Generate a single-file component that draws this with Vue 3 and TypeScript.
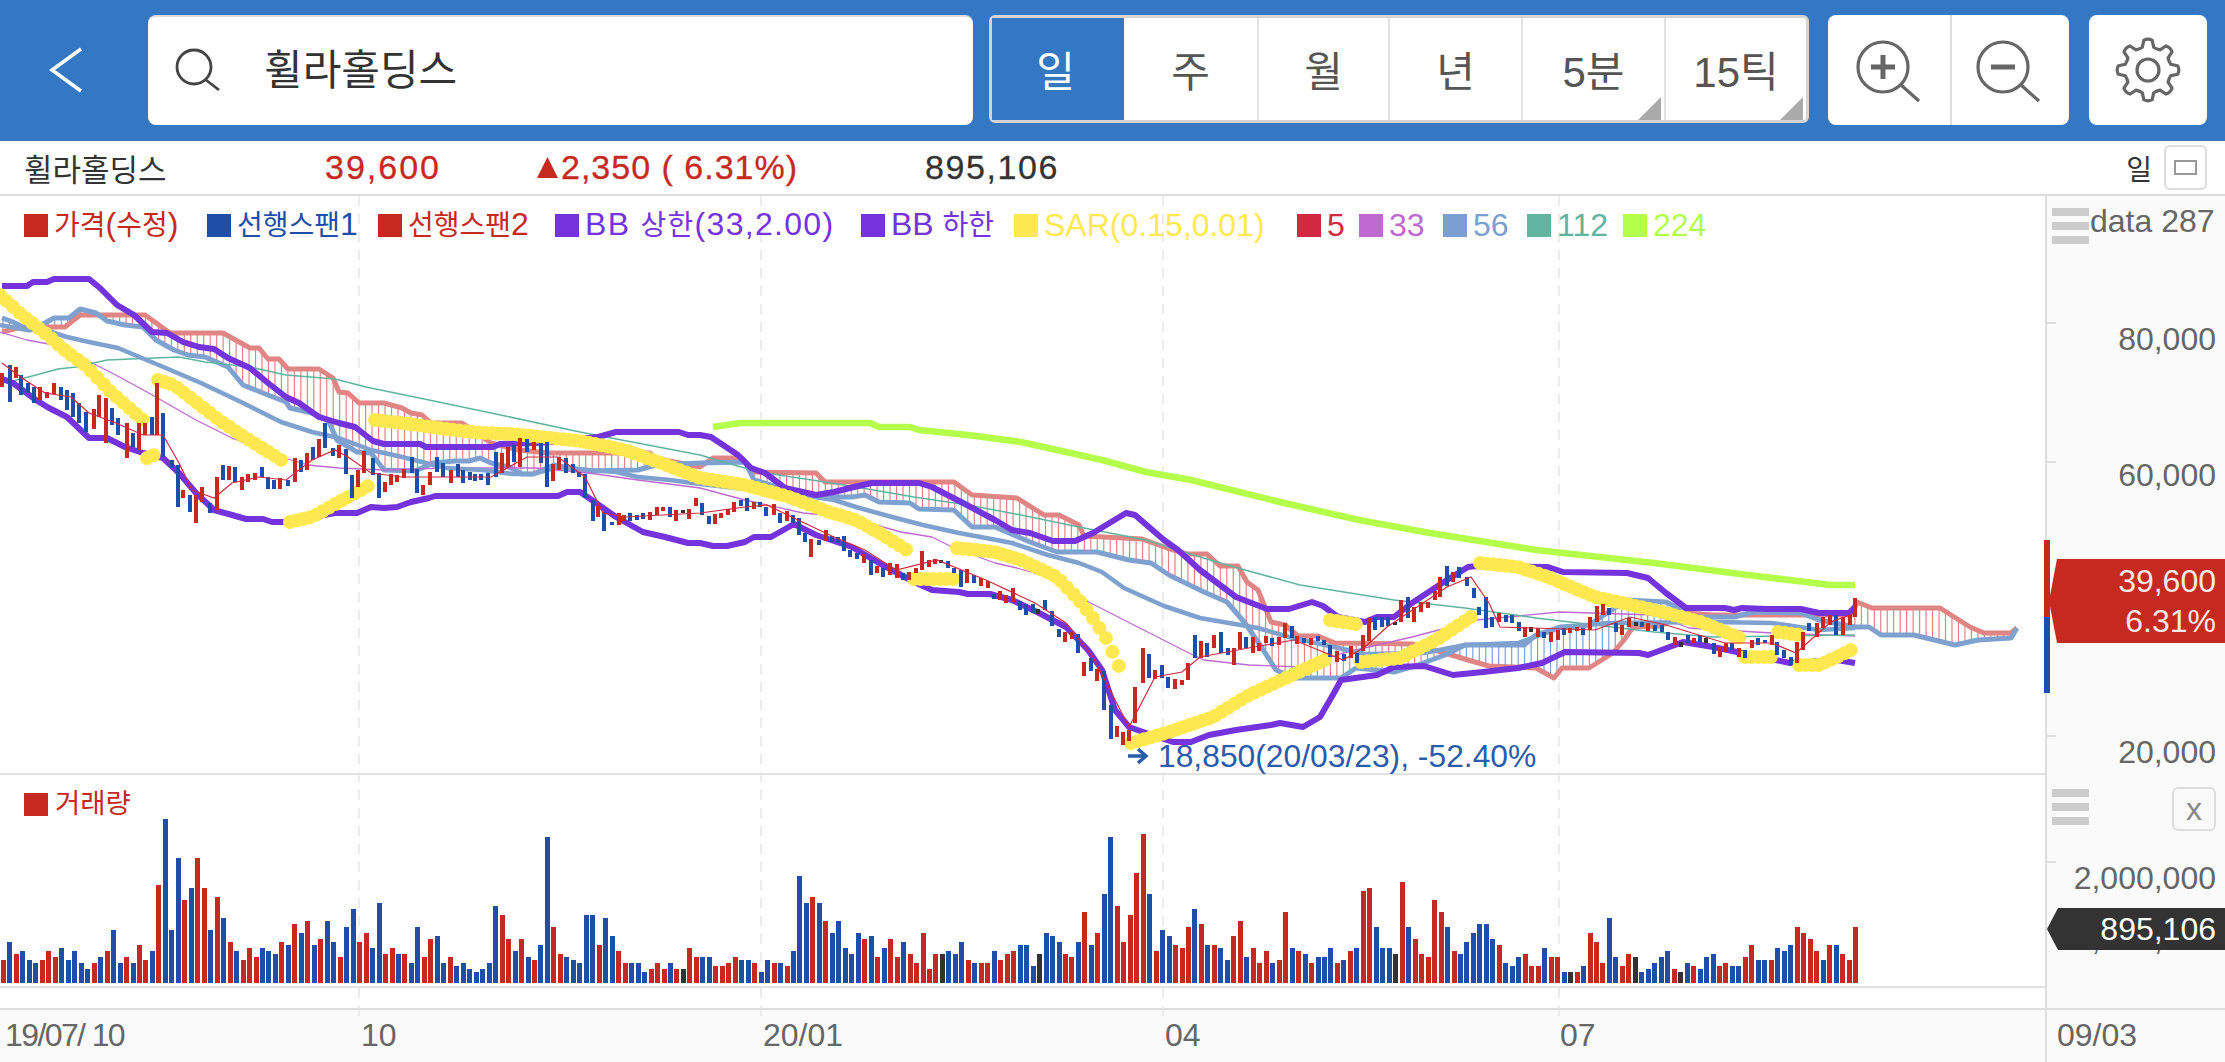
<template>
  <div class="screen">
    <header class="topbar">
      <button class="back">
        <svg width="40" height="50" viewBox="0 0 40 50"><path d="M36 4 L7 25 L36 46" class="chevron" /></svg>
      </button>
      <div class="search">
        <svg width="54" height="46" viewBox="0 0 54 46">
          <circle cx="22" cy="19" r="17" class="ico" />
          <path d="M34 32 L47 42" class="ico" />
        </svg>
        <span class="search-text">휠라홀딩스</span>
      </div>
      <div class="periods">
        <div v-for="p in periods" :key="p.label" class="period" :class="{ active: p.active, more: p.more }">{{ p.label }}</div>
      </div>
      <div class="tools">
        <div class="tool">
          <svg width="76" height="72" viewBox="0 0 76 72">
            <circle cx="30" cy="28" r="25" class="ico3" />
            <path d="M48 46 L66 62" class="ico3" />
            <path d="M18 28 H42 M30 16 V40" class="ico-bold" />
          </svg>
        </div>
        <div class="tool">
          <svg width="76" height="72" viewBox="0 0 76 72">
            <circle cx="30" cy="28" r="25" class="ico3" />
            <path d="M48 46 L66 62" class="ico3" />
            <path d="M18 28 H42" class="ico-bold" />
          </svg>
        </div>
      </div>
      <div class="settings">
        <svg width="70" height="66" viewBox="-35 -33 70 66">
          <path :d="gearPath" class="ico3" />
          <circle r="11" class="ico3" />
        </svg>
      </div>
    </header>

    <div class="quote">
      <span class="q-name">휠라홀딩스</span>
      <span class="q-price">39,600</span>
      <span class="q-change"><i class="tri"></i>2,350 ( 6.31%)</span>
      <span class="q-volume">895,106</span>
      <span class="q-period">일</span>
      <span class="q-box"><i></i></span>
    </div>

    <div class="chart">
      <div class="plot-col">
        <svg class="grid-lines" width="2045" height="824">
          <line v-for="g in gridX" :key="g.x" :x1="g.x" :x2="g.x" y1="0" y2="824" />
        </svg>

        <div class="pane-main">
          <svg width="2045" height="577" viewBox="0 196 2045 577">
            <line v-for="(h, i) in hatch" :key="'h' + i" :x1="h.x" :x2="h.x" :y1="h.y1" :y2="h.y2" :stroke="h.color" stroke-width="1.2" />
            <polyline v-for="s in lines" :key="s.name" :points="s.points" :stroke="s.color" :stroke-width="s.width" fill="none" stroke-linejoin="round" />
            <circle v-for="(d, i) in sarDots" :key="'d' + i" :cx="d[0]" :cy="d[1]" r="7" fill="#fde94f" />
            <rect v-for="(c, i) in candles" :key="'c' + i" :x="c.x" :y="c.y" width="4" :height="c.h" :fill="c.color" shape-rendering="crispEdges" />
            <polyline :points="ma5" stroke="#d1293f" stroke-width="1.2" fill="none" />
          </svg>
          <div class="legend">
            <span v-for="l in legend" :key="l.text" class="legend-item" :style="{ color: l.color, width: l.w + 'px', letterSpacing: (l.ls || 0) + 'px' }">
              <i :style="{ background: l.color }"></i>
              <span class="legend-text"><span v-for="(part, k) in splitHangul(l.text)" :key="k" :class="{ kr: /[가-힣]/.test(part) }">{{ part }}</span></span>
            </span>
          </div>
          <div class="low-mark">
            <svg width="22" height="20" viewBox="0 0 22 20"><path d="M1 10 H19 M11 3 L19 10 L11 17" fill="none" stroke="#2b5bab" stroke-width="3.4" /></svg>
            18,850(20/03/23), -52.40%
          </div>
        </div>

        <div class="pane-volume">
          <svg width="2045" height="213" viewBox="0 775 2045 213">
            <rect v-for="(b, i) in volumeBars" :key="i" :x="b.x" :y="b.y" width="5" :height="b.h" :fill="b.color" shape-rendering="crispEdges" />
          </svg>
          <div class="vol-title"><i></i>거래량</div>
        </div>

        <div class="spacer"></div>

        <div class="dates">
          <span v-for="d in dateLabels" :key="d.text" :class="{ tight: d.tight }" :style="{ left: d.x + 'px' }">{{ d.text }}</span>
        </div>
      </div>

      <div class="axis-col">
        <div class="axis-main">
          <div class="axis-head">
            <div class="bars"><i></i><i></i><i></i></div>
            <span class="data-count">data 287</span>
          </div>
          <i v-for="t in priceTicks" :key="t" class="tick" :style="{ top: t + 'px' }"></i>
          <span v-for="l in priceLabels" :key="l.text" class="axis-label" :style="{ top: l.y + 'px' }">{{ l.text }}</span>
          <i class="range-up"></i>
          <i class="range-down"></i>
          <div class="price-tag">
            <span>39,600</span>
            <span>6.31%</span>
          </div>
        </div>
        <div class="axis-volume">
          <div class="bars small"><i></i><i></i><i></i></div>
          <div class="close-box">x</div>
          <i class="tick" style="top: 86px"></i>
          <span class="axis-label" style="top: 85px">2,000,000</span>
          <span class="axis-label behind" style="top: 146px">1,000,000</span>
          <div class="volume-tag">895,106</div>
        </div>
        <div class="spacer"></div>
        <div class="dates"><span style="left: 10px">09/03</span></div>
      </div>
    </div>
  </div>
</template>

<script setup lang="ts">
type Pt = [number, number]

const RED = '#c6291f'
const BLUE = '#1e4fa8'
const DARK = '#333333'

const periods = [
  { label: '일', active: true },
  { label: '주' },
  { label: '월' },
  { label: '년' },
  { label: '5분', more: true },
  { label: '15틱', more: true }
]

const legend = [
  { text: '가격(수정)', color: RED, w: 183 },
  { text: '선행스팬1', color: BLUE, w: 171 },
  { text: '선행스팬2', color: RED, w: 177 },
  { text: 'BB 상한(33,2.00)', color: '#7433dd', w: 306, ls: 1.3 },
  { text: 'BB 하한', color: '#7433dd', w: 153 },
  { text: 'SAR(0.15,0.01)', color: '#fde94f', w: 283 },
  { text: '5', color: '#d1293f', w: 62 },
  { text: '33', color: '#bf6ad0', w: 84 },
  { text: '56', color: '#7a9fd0', w: 84 },
  { text: '112', color: '#60b4a0', w: 96 },
  { text: '224', color: '#b4ff4a', w: 90 }
]

const splitHangul = (s: string) => s.split(/([가-힣]+)/).filter(Boolean)

const gridX = [{ x: 359 }, { x: 761 }, { x: 1163 }, { x: 1559 }]
const dateLabels = [
  { text: '19/07/ 10', x: 5, tight: true },
  { text: '10', x: 361 },
  { text: '20/01', x: 763 },
  { text: '04', x: 1165 },
  { text: '07', x: 1560 }
]
// tops inside the price pane
const priceTicks = [126, 265, 402, 539]
const priceLabels = [
  { text: '80,000', y: 125 },
  { text: '60,000', y: 261 },
  { text: '20,000', y: 538 }
]

const parse = (s: string): Pt[] =>
  s.trim().split(/\s+/).map((p) => p.split(',').map(Number) as Pt)

// traced off the reference, full size pixels
const bbUp = '2,286 27,286 33,282 47,282 54,279 89,279 100,288 117,305 134,315 152,332 167,333 183,342 199,347 214,349 228,358 250,368 268,383 286,397 299,403 319,417 339,423 355,427 373,441 384,444 420,444 426,447 493,447 500,444 536,443 553,442 598,437 616,432 679,432 688,435 700,435 711,437 738,455 751,468 765,473 785,488 816,495 834,492 854,487 872,483 919,483 932,487 963,503 995,520 1012,530 1030,533 1053,541 1075,541 1093,533 1126,513 1135,515 1164,540 1178,550 1200,570 1236,597 1267,609 1289,609 1312,602 1323,606 1338,617 1365,622 1377,617 1394,617 1412,603 1447,580 1468,567 1477,566 1548,567 1563,572 1627,573 1648,578 1666,593 1686,608 1725,608 1734,610 1742,608 1766,609 1801,609 1819,613 1849,613 1855,607'
const bbDown = '0,378 13,383 36,400 49,408 67,417 89,438 107,438 125,447 143,453 163,458 179,473 196,493 214,510 232,515 246,519 263,519 272,522 286,522 335,513 357,513 371,507 384,508 397,507 411,502 429,498 435,496 558,496 567,492 580,492 589,498 616,517 643,532 665,537 688,543 700,543 713,546 727,546 745,542 754,537 771,537 794,524 816,535 852,547 879,563 914,582 932,590 959,592 968,594 990,594 1012,600 1039,613 1066,627 1088,650 1102,670 1115,710 1129,727 1146,733 1173,742 1191,742 1209,735 1236,730 1271,725 1280,723 1303,727 1320,717 1334,693 1341,680 1377,675 1394,667 1424,666 1453,675 1483,672 1518,668 1542,663 1565,652 1639,653 1648,655 1683,642 1713,647 1742,653 1790,663 1837,660 1855,663'
const span2 = '2,332 22,327 65,327 80,315 145,315 170,333 223,333 250,348 259,348 268,359 279,359 288,369 319,369 333,378 339,392 348,393 359,403 384,403 402,408 411,413 422,415 431,423 462,423 491,443 518,450 549,453 650,453 654,458 700,467 713,458 742,458 754,472 816,473 825,482 954,482 972,495 1017,498 1044,515 1059,515 1079,525 1084,536 1142,539 1167,548 1187,554 1207,554 1220,566 1238,566 1247,582 1258,590 1271,622 1285,625 1298,636 1318,636 1335,643 1412,644 1445,653 1468,660 1489,666 1536,668 1554,678 1562,668 1589,668 1613,653 1624,640 1633,627 1660,626 1686,613 1713,615 1852,615 1857,602 1872,608 1940,608 1970,627 1984,633 2011,633 2017,628'
const span1 = '2,318 13,322 29,330 45,323 54,318 69,318 80,309 96,313 107,321 125,325 143,327 156,340 174,350 188,355 205,357 219,363 228,367 243,385 268,395 286,402 290,408 312,413 328,420 337,440 357,452 371,453 384,470 415,471 433,463 455,461 469,461 480,458 491,463 509,467 522,474 533,474 554,465 585,471 638,470 656,465 700,463 745,462 754,480 771,485 820,497 852,497 865,495 879,502 910,503 919,509 954,510 972,527 995,527 1030,542 1057,552 1097,552 1129,560 1151,563 1169,575 1204,592 1227,602 1245,623 1262,648 1276,670 1294,678 1341,678 1356,668 1377,670 1394,672 1418,665 1445,655 1465,645 1524,645 1536,635 1560,627 1589,625 1627,600 1666,602 1683,610 1689,617 1734,617 1754,612 1801,613 1819,620 1855,627 1869,627 1881,635 1914,635 1955,645 1978,640 2011,638 2017,628'
const ma56 = '0,325 27,330 45,330 67,337 89,342 118,348 161,366 201,383 241,402 281,422 312,432 339,438 371,450 402,457 446,468 482,470 513,474 533,474 558,467 589,470 616,472 638,477 670,480 700,484 745,489 789,493 834,500 856,507 892,517 923,525 959,533 986,538 1012,543 1048,555 1079,563 1102,572 1124,588 1164,606 1200,618 1258,628 1289,637 1325,645 1365,654 1424,653 1465,645 1518,643 1560,628 1607,623 1713,622 1772,623 1819,630 1855,628'
const ma33 = '0,332 27,340 54,345 80,357 112,373 147,392 196,420 232,438 268,453 308,465 339,468 384,470 446,468 536,468 589,473 638,480 700,488 745,500 803,513 847,517 901,532 932,537 954,548 995,563 1017,568 1048,577 1079,597 1124,620 1187,652 1204,660 1249,665 1303,667 1343,653 1412,637 1477,620 1560,612 1654,615 1689,628 1772,633 1855,636'
const ma112 = '9,382 36,375 58,369 76,367 107,360 179,357 205,362 250,367 286,375 335,379 366,387 429,400 491,413 580,432 700,455 758,472 812,480 856,487 914,497 968,505 1021,515 1079,527 1146,540 1200,557 1245,570 1300,585 1394,600 1465,608 1536,618 1595,625 1654,632 1713,637 1855,635'
const ma224 = '713,427 740,423 870,423 879,427 910,427 919,430 968,435 1021,442 1102,460 1146,472 1191,480 1280,502 1359,520 1430,533 1536,550 1654,563 1748,575 1831,585 1855,585'

const ma5 = '2,363 22,378 45,393 71,397 89,413 116,423 143,435 163,435 179,463 192,490 214,498 232,483 259,477 286,480 312,460 335,450 348,457 371,473 402,477 491,477 527,457 558,457 585,477 603,513 625,517 700,513 745,507 767,505 798,520 834,537 865,550 896,570 937,560 986,580 1035,603 1066,623 1093,657 1129,727 1155,677 1182,672 1200,657 1254,647 1294,640 1343,660 1365,647 1387,627 1447,587 1471,577 1489,603 1500,627 1595,630 1630,617 1666,625 1725,643 1772,643 1796,653 1831,622 1855,613'

const lines = [
  { name: 'span2', points: span2, color: '#e08484', width: 5 },
  { name: 'span1', points: span1, color: '#7ea1d0', width: 5 },
  { name: 'ma33', points: ma33, color: '#bf6ad0', width: 1.3 },
  { name: 'ma112', points: ma112, color: '#60b4a0', width: 1.5 },
  { name: 'ma56', points: ma56, color: '#7ea1d0', width: 4.5 },
  { name: 'ma224', points: ma224, color: '#b4ff4a', width: 6.5 },
  { name: 'bbUp', points: bbUp, color: '#7433dd', width: 6 },
  { name: 'bbDown', points: bbDown, color: '#7433dd', width: 6 }
]

const BAR_STEP = 6.475

const yAt = (pts: Pt[], x: number): number | null => {
  for (let i = 1; i < pts.length; i++) {
    const [x0, y0] = pts[i - 1]
    const [x1, y1] = pts[i]
    if (x >= x0 && x <= x1) return y0 + ((y1 - y0) * (x - x0)) / (x1 - x0 || 1)
  }
  return null
}

// vertical cloud hatching between the two leading spans
const hatch = (() => {
  const out: { x: number; y1: number; y2: number; color: string }[] = []
  const a = parse(span1)
  const b = parse(span2)
  for (let x = 3; x < 2017; x += BAR_STEP) {
    const y1 = yAt(a, x)
    const y2 = yAt(b, x)
    if (y1 === null || y2 === null) continue
    out.push({ x, y1, y2, color: y2 < y1 ? '#e08484' : '#7ea1d0' })
  }
  return out
})()

const sarSegments = [
  '0,295 22,315 45,333 67,352 85,365 112,393 143,420',
  '147,458 154,455',
  '158,380 174,385 196,402 219,420 246,438 286,463',
  '290,522 312,517 339,502 368,486',
  '375,420 402,423 446,429 482,433 513,434 580,441 625,450 661,463 700,478 745,485 789,497 829,512 856,520 883,535 910,552',
  '914,579 955,579',
  '957,548 995,552 1021,560 1057,577 1079,600 1093,618 1106,638 1124,677',
  '1131,743 1169,732 1213,717 1249,695 1329,658',
  '1330,620 1362,625',
  '1361,662 1400,658 1436,640 1477,613',
  '1480,563 1518,567 1548,577 1595,597 1654,610 1701,622 1740,638',
  '1745,657 1775,657',
  '1778,632 1801,635',
  '1799,665 1819,665 1837,657 1855,648'
]

const sarDots = sarSegments.flatMap((s) => {
  const pts = parse(s)
  const end = pts[pts.length - 1][0]
  const out: Pt[] = []
  for (let x = pts[0][0]; x <= end; x += BAR_STEP) {
    const y = yAt(pts, x)
    if (y !== null) out.push([x, y])
  }
  return out
})

const colorOf = (c: string) => (c === 'R' ? RED : c === 'B' ? BLUE : DARK)

// candles by crop: x offset, x scale, y offset, then "x,top,bottom,colour"
const candleGroups: [number, number, number, string][] = [
  [0, 2.24, 250, '5,370,410,R 22,345,457,B 36,350,385,R 48,375,435,B 62,400,430,B 77,410,458,B 90,412,450,R 105,425,445,R 122,400,432,R 136,410,450,B 150,420,480,B 163,430,500,B 177,460,520,B 192,485,545,B 210,478,538,R 222,435,500,R 238,445,578,R 250,475,525,B 265,505,555,B 285,520,625,R 297,550,590,B 312,520,600,R 325,520,555,R 340,500,555,B 352,400,555,R 365,490,620,B 385,630,655,B 398,645,770,B 410,720,745,R 425,735,785,B 440,735,818,R 452,712,755,R 470,760,790,B 485,680,780,R 500,645,690,B 513,648,690,R 527,650,695,B 541,680,720,R 556,672,695,R 572,670,690,R 586,652,680,B 600,680,718,B 613,690,718,B 628,685,718,R 645,690,708,B 660,625,695,R 675,630,665,B 688,610,660,R 702,590,630,B 715,568,620,R 729,518,595,B 745,595,618,B 760,585,625,R 775,598,672,B 788,675,745,B 802,660,712,R 816,603,668,R 835,623,675,B 848,668,745,B 862,695,725,R 876,672,705,R 890,675,695,R 905,658,685,R 922,620,668,B 935,658,730,B 948,705,735,R 963,665,705,R 978,620,665,B 992,640,680,B 1011,660,700,R 1025,642,680,B 1038,660,698,B 1052,665,690,B 1065,672,692,B 1078,672,690,B 1092,668,705,B 1112,605,680,B 1124,610,668,R 1138,590,650,R 1152,585,635,B 1165,565,650,R 1180,568,605,B 1196,575,600,R 1212,580,640,B 1225,575,710,B 1238,642,692,R 1253,620,660,R 1267,625,670,B 1283,642,668,B 1298,665,682,B 1311,672,745,B 1328,750,812,B 1340,768,802,R 1354,785,842,B 1370,815,825,B 1386,790,825,R 1398,795,812,R 1412,788,812,B 1427,795,810,B 1441,790,808,B 1455,785,810,R 1472,770,795,R 1486,770,782,R 1500,770,800,B 1515,780,812,R 1530,780,790,K 1543,778,808,R 1558,745,768,R'],
  [700, 2.24, 400, '5,308,345,B 20,348,372,B 34,342,372,R 48,338,355,R 62,328,345,R 77,305,335,R 92,300,318,B 106,295,332,B 121,305,328,R 134,305,322,B 148,320,348,B 165,312,345,R 180,340,368,B 194,332,362,R 208,345,368,B 222,355,405,B 236,398,425,B 249,418,472,R 266,420,434,B 282,390,424,R 296,408,425,B 310,410,430,B 323,408,452,B 337,450,472,B 351,460,478,B 368,462,488,R 382,480,525,B 396,497,520,R 410,505,532,B 425,488,525,R 441,492,535,R 455,518,540,B 469,515,540,R 483,505,520,R 497,453,510,R 512,480,502,R 526,478,492,R 540,480,490,K 556,482,505,B 570,505,520,B 585,510,560,B 598,508,548,R 613,525,548,B 630,535,558,R 644,542,565,R 658,582,598,B 672,572,600,R 686,585,608,R 700,565,605,R 716,602,630,B 730,612,645,B 745,612,640,B 758,628,642,K 772,600,630,B 788,632,678,B 804,688,712,B 818,695,725,R 833,695,718,R 847,702,760,B 860,785,828,R 875,775,812,B 889,808,842,R 904,812,930,B 920,915,1018,B 933,978,1010,R 948,995,1035,R 961,990,1022,R 975,862,970,R 992,745,850,R 1006,762,835,B 1020,810,838,R 1034,795,835,B 1048,830,865,B 1064,838,868,R 1079,840,855,R 1093,788,840,R 1108,705,775,B 1122,722,775,R 1136,730,770,B 1151,705,745,R 1168,695,760,B 1182,745,765,B 1197,745,795,R 1210,695,748,R 1224,712,745,B 1238,712,760,R 1253,730,752,R 1268,708,730,R 1282,715,738,B 1297,712,735,R 1311,668,715,R 1325,678,715,B 1338,708,732,R 1353,715,730,B 1369,715,735,R 1384,708,722,B 1398,720,735,B 1412,735,770,B 1427,752,785,R 1442,762,782,B 1458,738,775,R 1472,760,790,B 1486,705,752,R 1498,655,722,R 1512,650,690,B 1528,650,680,B 1542,650,678,B 1556,665,675,K'],
  [1300, 1.695, 500, '172,300,365,R 183,290,355,B 194,320,365,R 205,305,335,R 217,305,325,R 228,272,300,R 238,230,290,R 250,198,258,B 260,215,245,R 270,202,235,B 283,230,258,B 295,265,295,B 304,322,345,B 316,292,385,B 326,350,382,B 337,340,365,R 350,345,365,B 360,345,368,B 371,365,392,B 381,380,412,R 391,380,395,K 403,385,412,R 414,395,415,B 426,395,425,R 437,390,420,R 448,385,405,B 458,385,400,R 470,380,392,R 479,385,405,B 492,350,390,R 503,318,365,R 514,312,345,R 524,325,345,B 535,368,395,B 545,375,405,R 558,355,382,R 569,365,378,K 580,365,380,B 590,370,392,R 602,375,392,B 613,375,395,B 624,395,420,B 635,410,435,R 646,425,440,K 657,405,430,B 668,415,430,R 678,405,425,B 688,415,430,K 701,428,462,B 712,440,470,R 722,430,455,R 733,430,450,B 744,445,470,R 754,450,475,B 766,420,445,R 777,415,435,B 788,420,430,B 800,405,435,R 809,425,465,B 820,450,475,B 832,470,495,B 843,425,490,R 853,395,450,R 863,370,392,B 876,370,410,R 887,350,385,R 898,345,375,R 909,345,405,B 920,352,405,R 932,345,375,R 941,295,350,R']
]

const candles = candleGroups.flatMap(([ox, sx, oy, s]) =>
  s.split(' ').map((item) => {
    const [x, top, bottom, c] = item.split(',')
    return {
      x: ox + Number(x) / sx - 2,
      y: oy + Number(top) / 3,
      h: (Number(bottom) - Number(top)) / 3,
      color: colorOf(c)
    }
  })
)

// colour + top of the bar as read at 3x, baseline at 640
const volumeRaw =
  'R570 B516 R552 B543 B570 B579 R570 R543 R561 B534 B570 B543 B579 B597 R579 B561 R543 B480 B579 R561 B579 R525 R570 B543 R345 B147 B480 B264 R390 B354 R264 R354 B480 R381 B444 R516 B543 R570 R534 R561 B534 B543 B552 R516 B525 R462 B489 R453 B525 R507 B453 B516 R561 B471 B417 R516 R489 B534 B399 R552 R534 B552 R552 B579 B471 R561 R507 B498 B579 R561 B588 B579 B597 B606 B597 B579 B408 R435 R507 B543 R507 B561 R570 B525 B201 R471 R552 B561 B570 B579 B435 B435 R525 B444 B498 R543 R579 B579 B579 B606 R597 R579 R597 B579 R597 K597 R534 R561 B561 B561 R588 R588 R579 R561 B570 B570 R579 B606 B570 R579 B579 R588 B543 B318 B399 R381 B399 R453 B489 B453 B534 B552 B489 R507 B498 R561 B534 R507 R561 B516 R552 R579 R489 R597 R552 K552 B543 B552 B516 R570 B579 R579 R579 B543 R570 R552 R543 B525 B525 B588 K552 B489 B498 B516 R552 R561 B516 R426 B525 R489 ' +
  'B372 B201 R408 R516 R435 R309 R192 B372 R543 B480 B498 R525 R534 R471 B417 R462 B525 R525 B534 B570 R498 R453 B561 R534 R579 R543 B579 R570 R426 B534 R543 B552 R579 B561 B561 B534 R579 B570 R543 B534 R363 R354 B471 B534 B534 K552 R336 B471 R507 R552 R561 R390 R426 B471 R543 B552 B516 B489 B462 B462 B507 R525 B579 B588 B561 R552 R588 R588 B534 R561 R561 B606 K606 R606 B588 R489 R516 R579 B444 B561 R588 R552 K561 B606 B597 B579 B561 B543 R597 K606 B579 R588 B597 B561 B552 R588 R579 B588 B588 R561 R525 B570 B570 R570 B534 B543 B525 R471 R489 R507 R543 B570 R525 B525 R552 R570 R471'

const volumeList = volumeRaw.split(' ')
const volumeBars = volumeList.map((v, i) => {
  const h = (640 - Number(v.slice(1))) / 3
  return {
    x: 1 + (i * 1852) / (volumeList.length - 1),
    y: 983 - h,
    h,
    color: colorOf(v[0])
  }
})

// 8 tooth outline
const gearPath = (() => {
  const teeth = 8
  const ro = 30
  const ri = 23.5
  const p: string[] = []
  for (let i = 0; i < teeth; i++) {
    const a = (i / teeth) * Math.PI * 2 - Math.PI / 2
    const step = Math.PI / teeth
    const at = (r: number, t: number) => `${(r * Math.cos(t)).toFixed(1)} ${(r * Math.sin(t)).toFixed(1)}`
    p.push(`${i ? 'L' : 'M'}${at(ri, a - step * 0.62)}`)
    p.push(`L${at(ro, a - step * 0.36)}`)
    p.push(`Q${at(ro + 2, a)} ${at(ro, a + step * 0.36)}`)
    p.push(`L${at(ri, a + step * 0.62)}`)
    p.push(`Q${at(ri - 1, a + step)} ${at(ri, a + step * 1.38)}`)
  }
  return p.join(' ') + 'Z'
})()
</script>

<style>
body {
  margin: 0;
  background: #fff;
}
</style>

<style scoped>
.screen {
  width: 2225px;
  height: 1062px;
  overflow: hidden;
  display: flex;
  flex-direction: column;
  font-family: 'Liberation Sans', 'Noto Sans CJK KR', sans-serif;
  color: #333;
  background: #fff;
}
.topbar {
  height: 141px;
  flex: none;
  display: flex;
  align-items: flex-start;
  padding-top: 15px;
  box-sizing: border-box;
  background: #3478c4;
}
.back {
  width: 148px;
  height: 110px;
  flex: none;
  padding: 0 0 0 45px;
  display: flex;
  align-items: center;
  border: 0;
  background: none;
}
.chevron {
  fill: none;
  stroke: #fff;
  stroke-width: 3.5;
}
.ico {
  fill: none;
  stroke: #444;
  stroke-width: 2.8;
}
.ico3 {
  fill: none;
  stroke: #666;
  stroke-width: 3.2;
}
.ico-bold {
  fill: none;
  stroke: #666;
  stroke-width: 5;
}
.search {
  width: 825px;
  height: 110px;
  flex: none;
  box-sizing: border-box;
  padding-left: 24px;
  display: flex;
  align-items: center;
  gap: 38px;
  background: #fff;
  border-top: 2px solid #ddd;
  border-radius: 8px;
}
.search-text {
  font-size: 42px;
  line-height: 50px;
  margin-top: 0;
  color: #333;
}
.periods {
  width: 820px;
  height: 108px;
  flex: none;
  margin-left: 16px;
  box-sizing: border-box;
  display: grid;
  grid-template-columns: 132px 135px 131px 133px 143px 1fr;
  border: 3px solid #d4d4d4;
  border-radius: 6px;
  background: #fff;
}
.period {
  position: relative;
  display: flex;
  align-items: center;
  justify-content: center;
  padding-bottom: 2px;
  box-sizing: border-box;
  font-size: 42px;
  color: #555;
  border-right: 2px solid #e2e2e2;
}
.period:last-child {
  border-right: 0;
}
.period.active {
  color: #fff;
  background: #3478c4;
  border-right: 0;
  padding-right: 5px;
}
.period.more::after {
  content: '';
  position: absolute;
  right: 3px;
  bottom: 0;
  width: 23px;
  height: 23px;
  background: #aaa;
  clip-path: polygon(100% 0, 100% 100%, 0 100%);
}
.tools {
  width: 241px;
  height: 110px;
  flex: none;
  margin-left: 19px;
  display: flex;
  background: #fff;
  border-radius: 8px;
}
.tool {
  flex: 1;
  padding-top: 24px;
  box-sizing: border-box;
}
.tool:first-child {
  padding-left: 25px;
  border-right: 2px solid #ddd;
}
.tool:last-child {
  padding-left: 21px;
}
.settings {
  width: 118px;
  height: 110px;
  flex: none;
  margin-left: 20px;
  display: flex;
  align-items: center;
  justify-content: center;
  background: #fff;
  border-radius: 8px;
}
.quote {
  height: 55px;
  flex: none;
  box-sizing: border-box;
  display: flex;
  align-items: center;
  border-bottom: 2px solid #ddd;
  padding-left: 24px;
  font-size: 34px;
  letter-spacing: 2px;
}
.q-name {
  width: 301px;
  font-size: 31px;
  letter-spacing: 0;
  color: #333;
}
.q-price {
  width: 212px;
  color: #c6291f;
  -webkit-text-stroke: 0.3px #c6291f;
}
.q-change {
  width: 388px;
  color: #c6291f;
  letter-spacing: 1px;
  -webkit-text-stroke: 0.3px #c6291f;
  display: flex;
  align-items: center;
  gap: 3px;
}
.tri {
  width: 21px;
  height: 21px;
  background: #c6291f;
  clip-path: polygon(50% 0, 100% 100%, 0 100%);
}
.q-volume {
  color: #333;
  letter-spacing: 1.6px;
  -webkit-text-stroke: 0.3px #333;
}
.q-period {
  margin-left: auto;
  font-size: 28px;
  letter-spacing: 0;
  color: #333;
}
.q-box {
  width: 43px;
  height: 45px;
  box-sizing: border-box;
  margin: 0 18px 0 12px;
  border: 2px solid #ddd;
  border-radius: 6px;
  display: flex;
  align-items: center;
  justify-content: center;
}
.q-box i {
  width: 23px;
  height: 15px;
  box-sizing: border-box;
  border: 2.5px solid #999;
}
.chart {
  flex: 1;
  display: grid;
  grid-template-columns: 2045px 180px;
  min-height: 0;
}
.plot-col {
  position: relative;
  display: flex;
  flex-direction: column;
  background: #fff;
}
.grid-lines {
  position: absolute;
  left: 0;
  top: 0;
  z-index: 1;
}
.grid-lines line {
  stroke: #e6e6e6;
  stroke-width: 1.5;
  stroke-dasharray: 10 8;
}
.pane-main,
.pane-volume {
  position: relative;
  z-index: 2;
  flex: none;
}
.pane-main svg,
.pane-volume svg {
  display: block;
}
.pane-main {
  height: 577px;
  border-bottom: 2px solid #e2e2e2;
}
.pane-volume {
  height: 211px;
  border-bottom: 2px solid #e2e2e2;
}
.spacer {
  height: 20px;
  flex: none;
}
.legend {
  position: absolute;
  left: 24px;
  top: 11px;
  display: flex;
  font-size: 32px;
  line-height: 34px;
  white-space: nowrap;
}
.legend-item {
  display: flex;
  align-items: center;
  gap: 6px;
  flex: none;
}
.legend-item i,
.vol-title i {
  width: 24px;
  height: 23px;
  flex: none;
}
.kr {
  font-size: 28px;
}
.low-mark {
  position: absolute;
  left: 1127px;
  top: 542px;
  display: flex;
  align-items: center;
  gap: 9px;
  font-size: 31.8px;
  line-height: 36px;
  color: #2b5bab;
  white-space: nowrap;
}
.vol-title {
  position: absolute;
  left: 24px;
  top: 13px;
  display: flex;
  align-items: center;
  gap: 7px;
  font-size: 27.5px;
  line-height: 32px;
  color: #c6291f;
}
.vol-title i {
  background: #c6291f;
}
.dates {
  position: relative;
  flex: 1;
  height: 54px;
  box-sizing: border-box;
  border-top: 2px solid #ddd;
  background: #fafafa;
}
.dates span {
  position: absolute;
  top: 7px;
  font-size: 32px;
  line-height: 36px;
  color: #666;
  white-space: nowrap;
}
.dates span.tight {
  letter-spacing: -1.6px;
}
.axis-col {
  position: relative;
  display: flex;
  flex-direction: column;
  box-sizing: border-box;
  border-left: 2px solid #ddd;
  background: #fafafa;
}
.axis-main {
  position: relative;
  height: 579px;
  flex: none;
}
.axis-volume {
  position: relative;
  height: 213px;
  flex: none;
}
.axis-head {
  display: flex;
  align-items: flex-start;
  padding: 12px 0 0 5px;
}
.bars {
  display: flex;
  flex-direction: column;
  gap: 6px;
  width: 37px;
  flex: none;
}
.bars i {
  height: 8px;
  background: #ccc;
}
.bars.small {
  position: absolute;
  left: 5px;
  top: 14px;
}
.data-count {
  font-size: 32px;
  line-height: 26px;
  color: #666;
  margin-left: 1px;
  white-space: nowrap;
}
.tick {
  position: absolute;
  left: 0;
  width: 9px;
  height: 2px;
  background: #ddd;
}
.axis-label {
  position: absolute;
  right: 9px;
  font-size: 32px;
  line-height: 36px;
  color: #666;
}
.range-up,
.range-down {
  position: absolute;
  left: -3px;
  width: 6px;
  z-index: 3;
}
.range-up {
  top: 344px;
  height: 77px;
  background: #c6291f;
}
.range-down {
  top: 421px;
  height: 76px;
  background: #1e4fa8;
}
.price-tag {
  position: absolute;
  left: 2px;
  right: 0;
  top: 363px;
  height: 84px;
  box-sizing: border-box;
  padding-right: 9px;
  display: flex;
  flex-direction: column;
  justify-content: center;
  align-items: flex-end;
  font-size: 32px;
  line-height: 40px;
  color: #f7e9e7;
  background: #c6291f;
  clip-path: polygon(8px 0, 100% 0, 100% 100%, 8px 100%, 0 50%);
}
.close-box {
  position: absolute;
  left: 125px;
  top: 12px;
  width: 44px;
  height: 44px;
  box-sizing: border-box;
  border: 2px solid #ddd;
  border-radius: 6px;
  display: flex;
  align-items: center;
  justify-content: center;
  font-size: 32px;
  color: #888;
}
.volume-tag {
  position: absolute;
  left: 0;
  right: 0;
  top: 133px;
  height: 42px;
  box-sizing: border-box;
  padding-right: 9px;
  display: flex;
  align-items: center;
  justify-content: flex-end;
  font-size: 32px;
  color: #fff;
  background: #333;
  clip-path: polygon(11px 0, 100% 0, 100% 100%, 11px 100%, 0 50%);
}
</style>
